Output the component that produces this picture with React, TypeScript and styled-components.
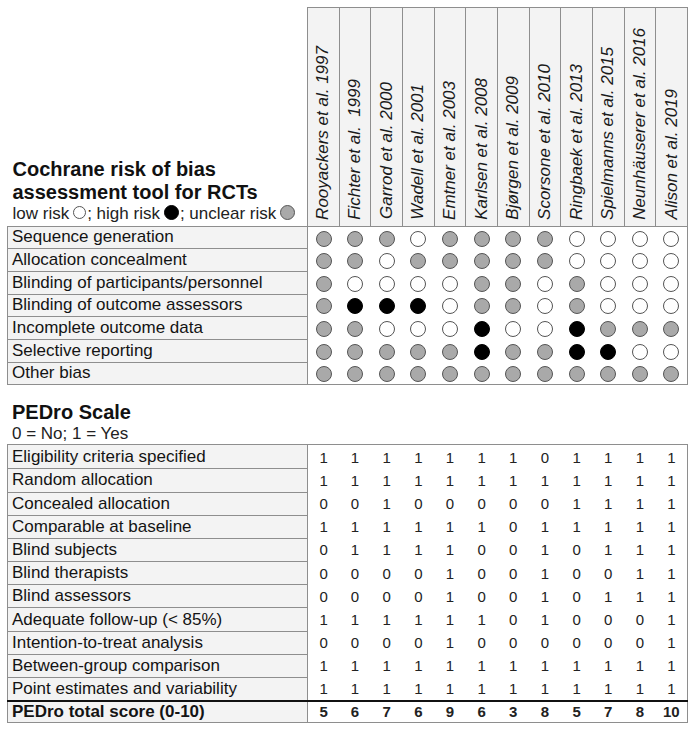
import React from "react";
import styled, { createGlobalStyle } from "styled-components";

type Risk = "L" | "H" | "U";

const studies = [
  "Rooyackers et al. 1997",
  "Fichter et al.  1999",
  "Garrod et al. 2000",
  "Wadell et al. 2001",
  "Emtner et al. 2003",
  "Karlsen et al. 2008",
  "Bjørgen et al. 2009",
  "Scorsone et al. 2010",
  "Ringbaek et al. 2013",
  "Spielmanns et al. 2015",
  "Neunhäuserer et al. 2016",
  "Alison et al. 2019",
];

const riskRows: { label: string; values: string }[] = [
  { label: "Sequence generation", values: "UUULUUUULLLL" },
  { label: "Allocation concealment", values: "UULUUUUULLLL" },
  { label: "Blinding of participants/personnel", values: "ULLLLUULULLL" },
  { label: "Blinding of outcome assessors", values: "UHHHLUULULLL" },
  { label: "Incomplete outcome data", values: "UULLLHLLHUUU" },
  { label: "Selective reporting", values: "UUUUUHUUHHLL" },
  { label: "Other bias", values: "UUUUUUUUUUUU" },
];

const pedroRows: { label: string; values: string }[] = [
  { label: "Eligibility criteria specified", values: "111111101111" },
  { label: "Random allocation", values: "111111111111" },
  { label: "Concealed allocation", values: "001000001111" },
  { label: "Comparable at baseline", values: "111111011111" },
  { label: "Blind subjects", values: "011110010111" },
  { label: "Blind therapists", values: "000010010011" },
  { label: "Blind assessors", values: "000010010111" },
  { label: "Adequate follow-up (< 85%)", values: "111111010001" },
  { label: "Intention-to-treat analysis", values: "000010000001" },
  { label: "Between-group comparison", values: "111111111111" },
  { label: "Point estimates and variability", values: "111111111111" },
];

const totals = [5, 6, 7, 6, 9, 6, 3, 8, 5, 7, 8, 10];

const GlobalStyle = createGlobalStyle`
  html, body { margin: 0; padding: 0; background: #ffffff; }
  body {
    font-family: Arial, "Liberation Sans", Helvetica, sans-serif;
    color: #141414;
  }
`;

const Page = styled.main`
  width: 695px;
  box-sizing: border-box;
  padding: 7px 0 0 7px;
`;

const Table = styled.table`
  border-collapse: collapse;
  table-layout: fixed;
  width: 680px;
`;

const LabelCol = styled.col`
  width: 300px;
`;

const StudyCol = styled.col`
  width: 31.667px;
`;

const TitleCell = styled.th`
  height: 216px;
  padding: 0 0 2px 5px;
  vertical-align: bottom;
  text-align: left;
  font-weight: normal;
`;

const Title = styled.div`
  font-size: 20px;
  line-height: 23px;
  font-weight: bold;
  color: #111;
`;

const Legend = styled.div`
  font-size: 17px;
  line-height: 20px;
  white-space: nowrap;
  color: #222;
`;

const StudyHead = styled.th`
  border: 1px solid #8e8e8e;
  background: #f3f3f3;
  padding: 0 0 2px;
  vertical-align: bottom;
  text-align: center;
  font-weight: normal;
`;

const StudyName = styled.span`
  display: inline-block;
  writing-mode: vertical-rl;
  transform: rotate(180deg);
  font-size: 17px;
  line-height: 20px;
  font-style: italic;
  white-space: pre;
  color: #1a1a1a;
`;

const Row = styled.tr<{ $h: number }>`
  height: ${(p) => p.$h}px;
`;

const LabelCell = styled.td<{ $bold?: boolean; $thick?: boolean }>`
  border: 1px solid #8e8e8e;
  ${(p) => (p.$thick ? "border-top: 2px solid #111;" : "")}
  background: #f3f3f3;
  padding: 0 4px;
  font-size: 17px;
  line-height: 20px;
  font-weight: ${(p) => (p.$bold ? "bold" : "normal")};
  white-space: nowrap;
  color: #141414;
`;

const ValueCell = styled.td<{ $top?: boolean; $bottom?: boolean; $thick?: boolean; $bold?: boolean }>`
  padding: 0;
  text-align: center;
  vertical-align: middle;
  font-size: 15px;
  font-weight: ${(p) => (p.$bold ? "bold" : "normal")};
  color: #222;
  ${(p) => (p.$top ? "border-top: 1px solid #8e8e8e;" : "")}
  ${(p) => (p.$bottom ? "border-bottom: 1px solid #8e8e8e;" : "")}
  ${(p) => (p.$thick ? "border-top: 2px solid #111;" : "")}
  &:last-child {
    border-right: 1px solid #8e8e8e;
  }
`;

const Dot = styled.span<{ $risk: Risk; $size?: number }>`
  display: inline-block;
  box-sizing: border-box;
  width: ${(p) => p.$size ?? 16}px;
  height: ${(p) => p.$size ?? 16}px;
  border-radius: 50%;
  border: 1.5px solid ${(p) => (p.$risk === "H" ? "#000" : "#555")};
  background: ${(p) => (p.$risk === "H" ? "#000" : p.$risk === "U" ? "#a9a9a9" : "#fff")};
  vertical-align: middle;
`;

const LegendDot = styled(Dot)`
  margin: -3px 1px 0 4px;
`;

const SectionHead = styled.div`
  padding: 16px 0 0 5px;
`;

const Colgroup = () => (
  <colgroup>
    <LabelCol />
    {studies.map((s) => (
      <StudyCol key={s} />
    ))}
  </colgroup>
);

export default function App() {
  return (
    <>
      <GlobalStyle />
      <Page>
        <Table>
          <Colgroup />
          <thead>
            <tr>
              <TitleCell>
                <Title>
                  Cochrane risk of bias
                  <br />
                  assessment tool for RCTs
                </Title>
                <Legend>
                  low risk<LegendDot $risk="L" $size={13} />; high risk<LegendDot $risk="H" $size={15} />; unclear risk<LegendDot $risk="U" $size={15} />
                </Legend>
              </TitleCell>
              {studies.map((s) => (
                <StudyHead key={s}>
                  <StudyName>{s}</StudyName>
                </StudyHead>
              ))}
            </tr>
          </thead>
          <tbody>
            {riskRows.map((r, ri) => (
              <Row key={r.label} $h={22.7}>
                <LabelCell>{r.label}</LabelCell>
                {r.values.split("").map((v, i) => (
                  <ValueCell key={i} $bottom={ri === riskRows.length - 1}>
                    <Dot $risk={v as Risk} />
                  </ValueCell>
                ))}
              </Row>
            ))}
          </tbody>
        </Table>

        <SectionHead>
          <Title>PEDro Scale</Title>
          <Legend>0 = No; 1 = Yes</Legend>
        </SectionHead>

        <Table>
          <Colgroup />
          <tbody>
            {pedroRows.map((r, ri) => (
              <Row key={r.label} $h={ri === 0 ? 24 : 23.2}>
                <LabelCell>{r.label}</LabelCell>
                {r.values.split("").map((v, i) => (
                  <ValueCell key={i} $top={ri === 0}>
                    {v}
                  </ValueCell>
                ))}
              </Row>
            ))}
            <Row $h={22}>
              <LabelCell $bold $thick>
                PEDro total score (0-10)
              </LabelCell>
              {totals.map((t, i) => (
                <ValueCell key={i} $thick $bottom $bold>
                  {t}
                </ValueCell>
              ))}
            </Row>
          </tbody>
        </Table>
      </Page>
    </>
  );
}
